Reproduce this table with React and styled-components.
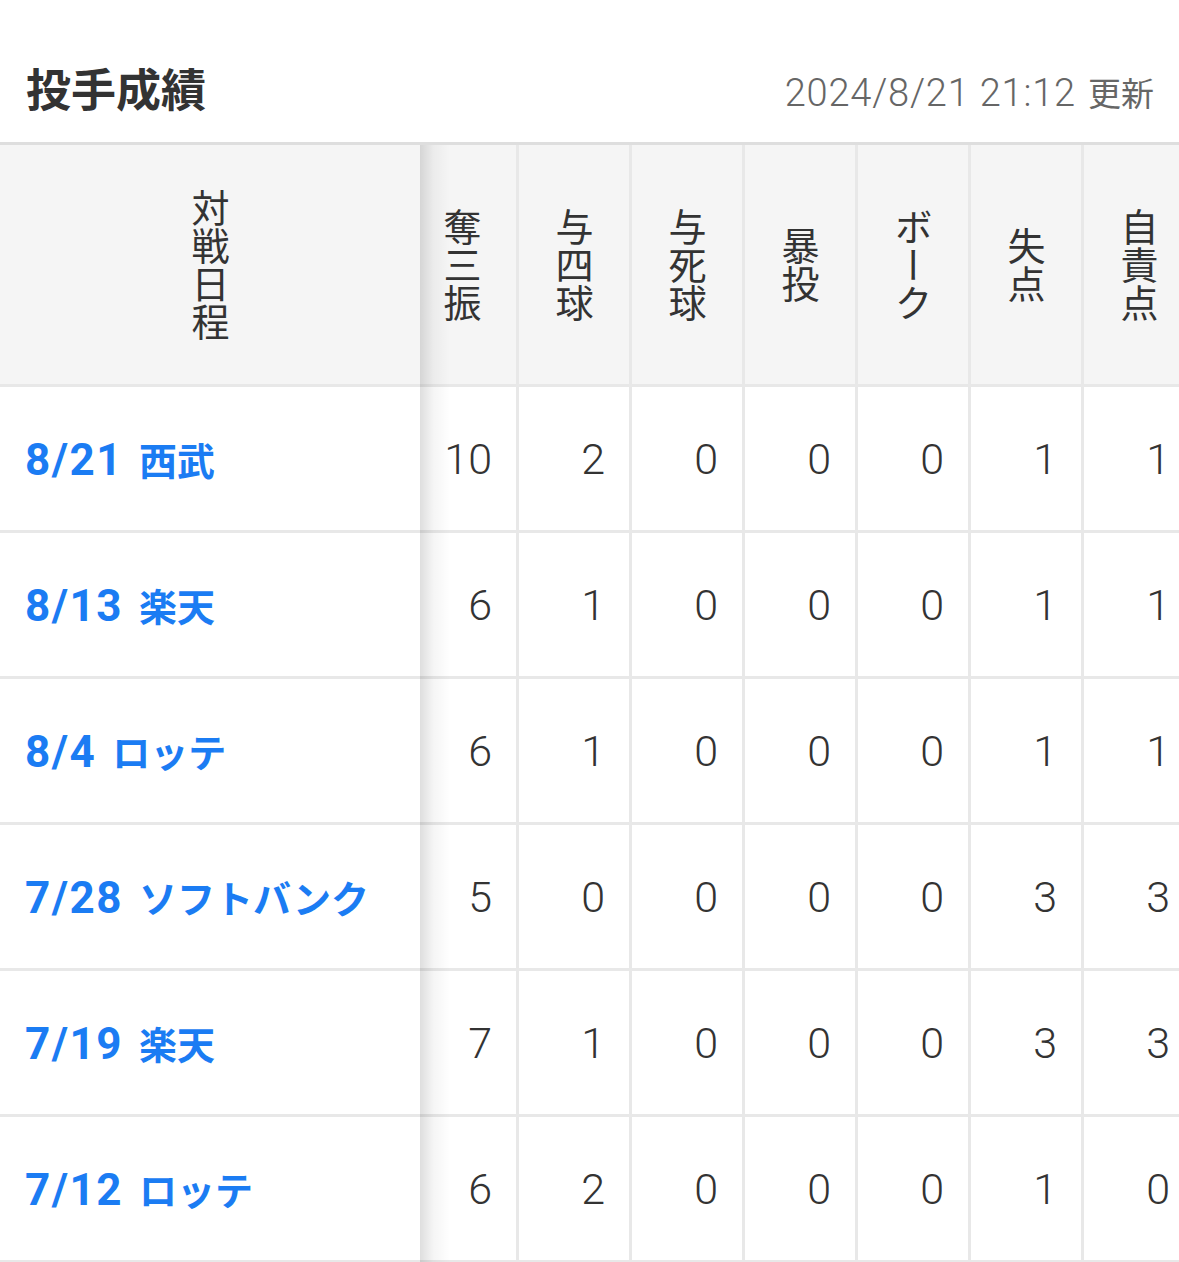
import styled, { createGlobalStyle } from 'styled-components';

const GlobalStyle = createGlobalStyle`
  * { box-sizing: border-box; }
  body {
    margin: 0;
    background: #fff;
    font-family: "Noto Sans CJK JP", "Noto Sans", sans-serif;
    color: #333;
    overflow: hidden;
  }
`;

const columns = ['奪三振', '与四球', '与死球', '暴投', 'ボーク', '失点', '自責点'];

const games = [
    { date: '8/21', team: '西武', stats: [10, 2, 0, 0, 0, 1, 1] },
    { date: '8/13', team: '楽天', stats: [6, 1, 0, 0, 0, 1, 1] },
    { date: '8/4', team: 'ロッテ', stats: [6, 1, 0, 0, 0, 1, 1] },
    { date: '7/28', team: 'ソフトバンク', stats: [5, 0, 0, 0, 0, 3, 3] },
    { date: '7/19', team: '楽天', stats: [7, 1, 0, 0, 0, 3, 3] },
    { date: '7/12', team: 'ロッテ', stats: [6, 2, 0, 0, 0, 1, 0] },
];

const Page = styled.div`
  width: 1179px;
  overflow: hidden;
`;

const TitleBar = styled.div`
  height: 142px;
  padding: 33px 25px 0 26px;
  display: flex;
  align-items: center;
  justify-content: space-between;
`;

const Title = styled.h2`
  margin: 0;
  font-size: 45px;
  font-weight: 700;
  color: #333;
  line-height: 1;
`;

const Updated = styled.span`
  font-family: Roboto, "Noto Sans CJK JP", sans-serif;
  font-size: 38px;
  font-weight: 300;
  letter-spacing: 0.8px;
  color: #666;
  line-height: 1;
  margin-top: 10px;
`;

const UpdatedLabel = styled.span`
  font-family: "Noto Sans CJK JP", sans-serif;
  font-weight: 400;
  font-size: 33px;
  letter-spacing: 0;
  margin-left: 2px;
`;

const Table = styled.div`
  width: 1197px;
  border-top: 3px solid #dedede;
  display: flex;
  flex-direction: column;
`;

const Row = styled.div`
  display: grid;
  grid-template-columns: 420px 99px repeat(6, 113px);
  height: ${p => (p.$head ? 242 : 146)}px;
  background: ${p => (p.$head ? '#f5f5f5' : '#fff')};
`;

const Cell = styled.div`
  border-bottom: 3px solid #e8e8e8;
  border-right: 3px solid #e8e8e8;
  display: flex;
  align-items: center;
`;

const StickyCell = styled(Cell)`
  position: relative;
  border-right: none;
  justify-content: ${p => (p.$head ? 'center' : 'flex-start')};
  padding-left: ${p => (p.$head ? 0 : 25)}px;
  background: ${p => (p.$head ? '#f5f5f5' : '#fff')};
  z-index: 1;

  &::after {
    content: '';
    position: absolute;
    top: 0;
    bottom: -3px;
    left: 100%;
    width: 30px;
    background: linear-gradient(to right, rgba(0, 0, 0, 0.13), rgba(0, 0, 0, 0.04) 45%, rgba(0, 0, 0, 0));
  }
`;

const HeadCell = styled(Cell)`
  justify-content: center;
  padding-right: ${p => p.$shift || 0}px;
`;

const VerticalText = styled.span`
  writing-mode: vertical-rl;
  font-size: 38px;
  line-height: 1;
  color: #333;
`;

const GameLink = styled.a`
  display: flex;
  align-items: baseline;
  gap: 16px;
  color: #1b7cf3;
  text-decoration: none;
  white-space: nowrap;
`;

const GameDate = styled.span`
  font-family: Roboto, sans-serif;
  font-size: 44px;
  font-weight: 700;
  letter-spacing: 1.5px;
`;

const GameTeam = styled.span`
  font-size: 38px;
  font-weight: 700;
`;

const NumCell = styled(Cell)`
  justify-content: flex-end;
  padding-right: 24px;
  font-family: Roboto, sans-serif;
  font-size: 43px;
  font-weight: 300;
  color: #333;
`;

const App = () => {
    return (
        <Page>
            <GlobalStyle />
            <TitleBar>
                <Title>投手成績</Title>
                <Updated>
                    2024/8/21 21:12 <UpdatedLabel>更新</UpdatedLabel>
                </Updated>
            </TitleBar>
            <Table>
                <Row $head>
                    <StickyCell $head>
                        <VerticalText>対戦日程</VerticalText>
                    </StickyCell>
                    {columns.map((c, i) => (
                        <HeadCell key={c} $shift={i === 0 ? 12 : 0}>
                            <VerticalText>{c}</VerticalText>
                        </HeadCell>
                    ))}
                </Row>
                {games.map(g => (
                    <Row key={g.date}>
                        <StickyCell>
                            <GameLink href="#">
                                <GameDate>{g.date}</GameDate>
                                <GameTeam>{g.team}</GameTeam>
                            </GameLink>
                        </StickyCell>
                        {g.stats.map((s, i) => (
                            <NumCell key={i}>{s}</NumCell>
                        ))}
                    </Row>
                ))}
            </Table>
        </Page>
    );
};

export default App;
